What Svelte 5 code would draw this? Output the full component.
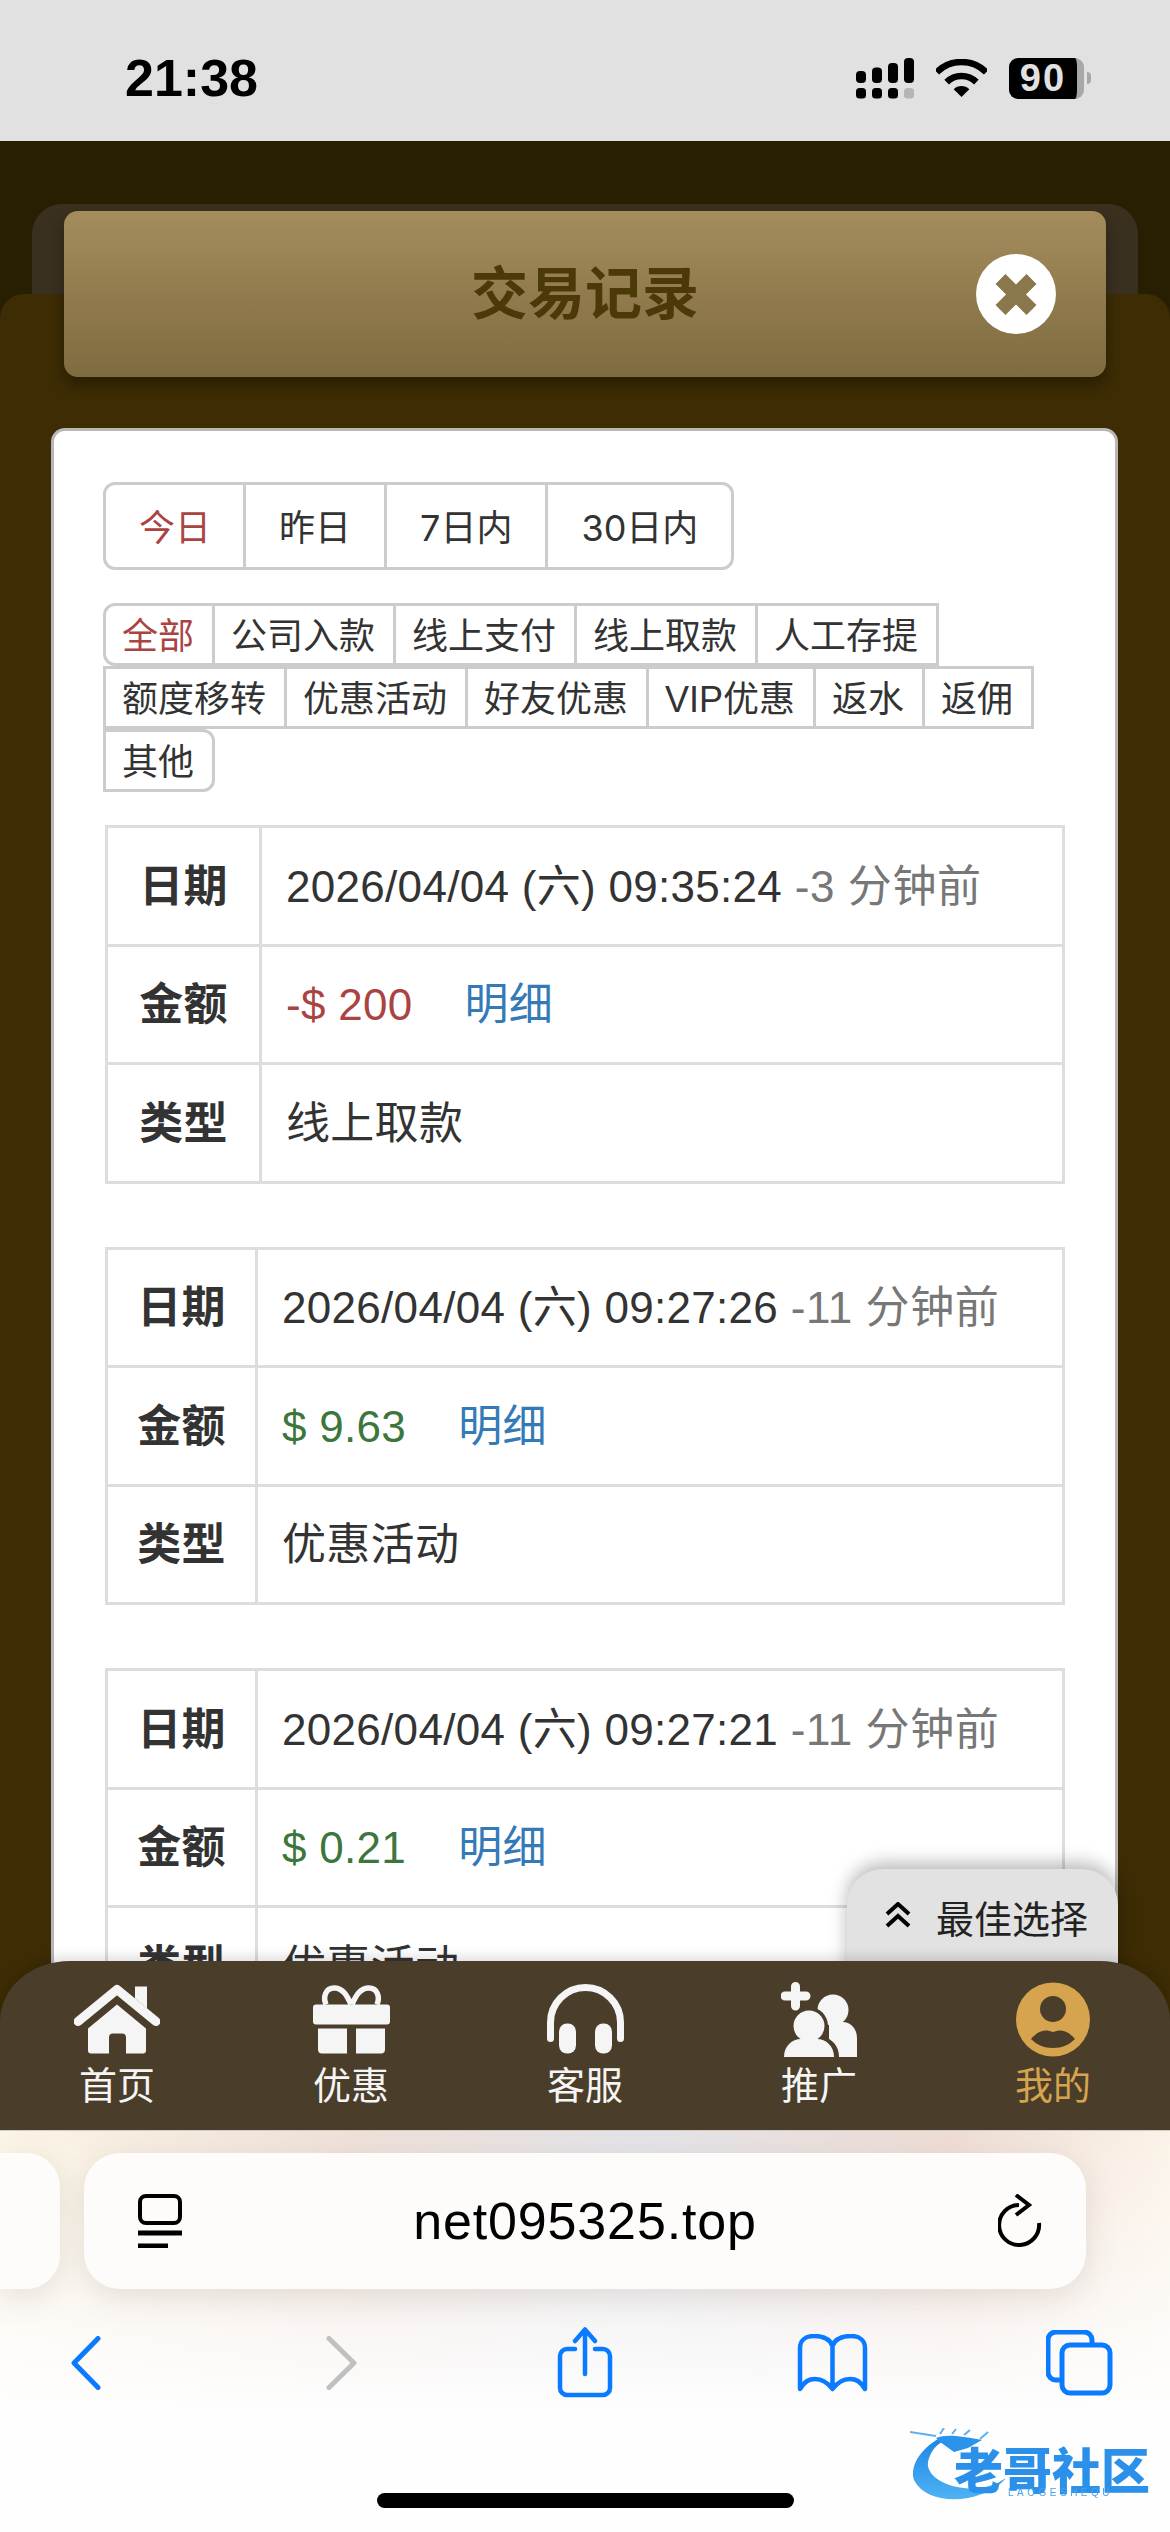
<script>
  const ranges = ['今日', '昨日', '7日内', '30日内'];
  const kinds = ['全部', '公司入款', '线上支付', '线上取款', '人工存提', '额度移转', '优惠活动', '好友优惠', 'VIP优惠', '返水', '返佣', '其他'];
  const records = [
    { date: '2026/04/04 (六) 09:35:24', ago: '-3 分钟前', amount: '-$ 200', tone: 'out', type: '线上取款', wide: true },
    { date: '2026/04/04 (六) 09:27:26', ago: '-11 分钟前', amount: '$ 9.63', tone: 'in', type: '优惠活动', wide: false },
    { date: '2026/04/04 (六) 09:27:21', ago: '-11 分钟前', amount: '$ 0.21', tone: 'in', type: '优惠活动', wide: false }
  ];
</script>

<div class="screen">
  <header class="status">
    <span class="time">21:38</span>
    <div class="status-icons">
      <svg class="signal" width="58" height="41" viewBox="0 0 58 41">
        <rect x="0" y="13" width="10" height="12" rx="4" />
        <rect x="16" y="9.500" width="10" height="15.500" rx="4" />
        <rect x="32" y="5" width="10" height="20" rx="4" />
        <rect x="48" y="0" width="10" height="25" rx="4" />
        <rect x="0" y="30" width="10" height="10.500" rx="3.500" />
        <rect x="16" y="30" width="10" height="10.500" rx="3.500" />
        <rect x="32" y="30" width="10" height="10.500" rx="3.500" />
        <rect x="48" y="30" width="10" height="10.500" rx="3.500" fill="#b5b5b5" />
      </svg>
      <svg class="wifi" width="51" height="38" viewBox="0 0 51 38">
        <path d="M0.750 13.250A35 35 0 0 1 50.250 13.250" />
        <path d="M10.650 23.150A21 21 0 0 1 40.350 23.150" />
        <path class="dot" d="M25.500 38L17.700 30.200A11 11 0 0 1 33.300 30.200Z" />
      </svg>
      <div class="battery"><span>90</span></div>
      <i class="nub"></i>
    </div>
  </header>

  <main class="page">
    <div class="head-back">
      <div class="head">
        <h1>交易记录</h1>
        <button class="close" aria-label="关闭">
          <svg width="42" height="41" viewBox="0 0 42 41"><path d="M5.500 5L36.500 36M36.500 5L5.500 36" /></svg>
        </button>
      </div>
    </div>

    <section class="sheet">
      <div class="card">
        <div class="ranges">
          {#each ranges as r, i}
            <span class="range" class:on={i === 0}>{r}</span>
          {/each}
        </div>

        <div class="kinds">
          {#each kinds as k, i}
            <span class="kind" class:on={i === 0}>{k}</span>
          {/each}
        </div>

        {#each records as rec}
          <table class:wide={rec.wide}>
            <tbody>
              <tr>
                <th>日期</th>
                <td>{rec.date} <span class="ago">{rec.ago}</span></td>
              </tr>
              <tr>
                <th>金额</th>
                <td><span class={rec.tone}>{rec.amount}</span><a class="more" href="#top">明细</a></td>
              </tr>
              <tr>
                <th>类型</th>
                <td>{rec.type}</td>
              </tr>
            </tbody>
          </table>
        {/each}
      </div>

      <button class="best">
        <svg width="28" height="26" viewBox="0 0 28 26"><path d="M3 12L14 2L25 12M3 24L14 14L25 24" /></svg>
        最佳选择
      </button>
    </section>
  </main>

  <nav class="tabs">
    <div class="tab">
      <svg width="86" height="68" viewBox="0 0 86 68" fill="#f5f5f5">
        <path d="M61 1h12v22l-12-10z" />
        <path d="M4 36L43 4L82 36" fill="none" stroke="#f5f5f5" stroke-width="9" stroke-linecap="round" stroke-linejoin="round" />
        <path d="M43 19L72 43V65a3 3 0 0 1-3 3H52V52a4 4 0 0 0-4-4H39a4 4 0 0 0-4 4V68H17a3 3 0 0 1-3-3V43z" />
      </svg>
      <span>首页</span>
    </div>
    <div class="tab">
      <svg width="77" height="68" viewBox="0 0 77 68" fill="#f5f5f5">
        <path d="M38 19C34 10 30 3 22 2.500C12 2 10 12 13 19M39 19C43 10 47 3 55 2.500C65 2 67 12 64 19" fill="none" stroke="#f5f5f5" stroke-width="5.500" />
        <rect x="0" y="19" width="77" height="20" rx="3" />
        <path d="M5 43H34V68H9a4 4 0 0 1-4-4zM43 43H72V64a4 4 0 0 1-4 4H43z" />
      </svg>
      <span>优惠</span>
    </div>
    <div class="tab">
      <svg width="77" height="68" viewBox="0 0 77 68" fill="#f5f5f5">
        <path d="M3.500 53V37A35 35 0 0 1 73.500 37V53" fill="none" stroke="#f5f5f5" stroke-width="7" stroke-linecap="round" />
        <rect x="12" y="38" width="17" height="30" rx="8" />
        <rect x="48" y="38" width="17" height="30" rx="8" />
      </svg>
      <span>客服</span>
    </div>
    <div class="tab">
      <svg width="76" height="75" viewBox="0 0 76 75" fill="#f5f5f5">
        <path d="M14.500 4.500V24M4 14H25" fill="none" stroke="#f5f5f5" stroke-width="9" stroke-linecap="round" />
        <circle cx="52" cy="28" r="15.500" />
        <path d="M46 40H62C70 40 76 47 76 56V75H48V40z" />
        <circle cx="28" cy="44" r="19" fill="#4a3e2a" />
        <path d="M0 75C0 62 8 52 28 52C48 52 58 62 58 75z" fill="#4a3e2a" />
        <circle cx="28" cy="44" r="15.500" />
        <path d="M3 75C3 64 11 57 20 57H36C45 57 53 64 53 75z" />
      </svg>
      <span>推广</span>
    </div>
    <div class="tab active">
      <svg width="74" height="75" viewBox="0 0 74 75">
        <circle cx="37" cy="37.500" r="37" fill="#d6a44e" />
        <circle cx="37" cy="27" r="13" fill="#4a3e2a" />
        <path d="M15 57C21 50 28 46 37 50C46 46 53 50 59 57C53 63 46 66 37 66C28 66 21 63 15 57z" fill="#4a3e2a" />
      </svg>
      <span>我的</span>
    </div>
  </nav>

  <footer class="safari">
    <div class="url-row">
      <div class="other-tab"></div>
      <div class="url">
        <svg class="ink" width="44" height="54" viewBox="0 0 44 54">
          <rect x="2" y="2" width="40" height="27" rx="6" stroke-width="4" />
          <path d="M0 39H44M0 52H30" stroke-width="5" />
        </svg>
        <span class="host">net095325.top</span>
        <svg class="ink" width="44" height="54" viewBox="0 0 44 54">
          <path d="M21 11A20 20 0 1 0 41 29" stroke-width="4" />
          <path d="M18 1L31 11L18 21" stroke-width="4" />
        </svg>
      </div>
    </div>

    <div class="toolbar">
      <svg class="blue" width="30" height="54" viewBox="0 0 30 54"><path d="M27 2.500L3 27L27 51.500" stroke-width="5" /></svg>
      <svg class="grey" width="31" height="54" viewBox="0 0 31 54"><path d="M3 2.500L28 27L3 51.500" stroke-width="5" /></svg>
      <svg class="blue" width="56" height="71" viewBox="0 0 56 71">
        <path d="M18 22H10a7 7 0 0 0-7 7V61a7 7 0 0 0 7 7H46a7 7 0 0 0 7-7V29a7 7 0 0 0-7-7H38" stroke-width="4.500" />
        <path d="M28 47V3M18 14L28 2.500L38 14" stroke-width="4.500" />
      </svg>
      <svg class="blue" width="71" height="58" viewBox="0 0 71 58">
        <path d="M35.500 12C33 5 26 2 17 2C8 2 3 7 3 14V55C8 47 12 45 18 45C25 45 31 49 35.500 55C40 49 46 45 53 45C59 45 63 47 68 55V14C68 7 63 2 54 2C45 2 38 5 35.500 12V50" stroke-width="4.500" />
      </svg>
      <svg class="blue" width="67" height="66" viewBox="0 0 67 66">
        <path d="M14 50H10a8 8 0 0 1-8-8V10a8 8 0 0 1 8-8H38a8 8 0 0 1 8 8V14" stroke-width="5" />
        <rect x="16" y="15" width="48" height="48" rx="8" stroke-width="5" />
      </svg>
    </div>

    <div class="home-bar"></div>

    <div class="mark">
      <svg width="120" height="76" viewBox="0 0 120 76">
        <defs>
          <linearGradient id="ring" x1="0" y1="0" x2="0" y2="1">
            <stop offset="0" stop-color="#1c86e6" />
            <stop offset="1" stop-color="#4fb2f4" />
          </linearGradient>
        </defs>
        <path d="M30 10C8 22 0 40 4 52C12 68 34 74 58 70C76 66 88 60 96 50C84 58 70 62 54 60C32 58 16 46 18 34C20 24 26 16 36 12z" fill="url(#ring)" />
        <path d="M26 10C36 6 50 8 72 12L58 20L44 24L30 14z" fill="#2b93ea" />
        <path d="M0 4L26 8M30 6L34 0M42 6L46 1M54 7L60 2M70 11L78 4" fill="none" stroke="#5fb0ef" stroke-width="2" />
      </svg>
      <strong>老哥社区</strong>
      <em>LAOGESHEQU</em>
    </div>
  </footer>
</div>

<style>
  :global(body) {
    margin: 0;
  }

  .screen {
    width: 1170px;
    height: 2532px;
    overflow: hidden;
    display: flex;
    flex-direction: column;
    position: relative;
    font-family: "Liberation Sans", "Noto Sans CJK SC", sans-serif;
    color: #333;
  }

  /* status bar */
  .status {
    height: 141px;
    flex: none;
    box-sizing: border-box;
    padding: 15px 79px 0 125px;
    background: #e1e1e1;
    display: flex;
    align-items: center;
    justify-content: space-between;
  }

  .time {
    font-size: 52px;
    font-weight: 700;
    color: #000;
  }

  .status-icons {
    display: flex;
    align-items: center;
  }

  .signal {
    fill: #000;
    margin-right: 22px;
  }

  .wifi {
    margin-right: 22px;
  }

  .wifi path {
    fill: none;
    stroke: #000;
    stroke-width: 6.500;
  }

  .wifi .dot {
    fill: #000;
    stroke: none;
  }

  .battery {
    width: 75px;
    height: 41px;
    box-sizing: border-box;
    border-right: 7px solid #a8a8a8;
    border-radius: 9px;
    background: #000;
    display: flex;
    align-items: center;
    justify-content: center;
  }

  .battery span {
    font-size: 38px;
    font-weight: 700;
    color: #e1e1e1;
    letter-spacing: 2px;
  }

  .nub {
    width: 4px;
    height: 12px;
    margin-left: 3px;
    background: #a8a8a8;
    border-radius: 0 4px 4px 0;
  }

  /* page */
  .page {
    flex: 1;
    min-height: 0;
    overflow: hidden;
    position: relative;
    background: #281f02;
  }

  .head-back {
    margin: 63px 32px 0;
    height: 90px;
    box-sizing: border-box;
    padding: 7px 32px 0;
    background: #3a3020;
    border-radius: 30px 30px 0 0;
  }

  .head {
    position: relative;
    z-index: 1;
    height: 166px;
    box-sizing: border-box;
    padding-bottom: 10px;
    display: flex;
    align-items: center;
    justify-content: center;
    border-radius: 14px;
    background: linear-gradient(180deg, #a48c5c, #7f6b40);
    box-shadow: 0 8px 14px rgba(0, 0, 0, 0.32);
  }

  .head h1 {
    margin: 0;
    font-size: 57px;
    font-weight: 700;
    color: #4b3a08;
  }

  .close {
    position: absolute;
    right: 50px;
    top: 43px;
    width: 80px;
    height: 80px;
    padding: 0;
    border: 0;
    border-radius: 50%;
    background: #fff;
    display: flex;
    align-items: center;
    justify-content: center;
  }

  .close path {
    fill: none;
    stroke: #8b774c;
    stroke-width: 14;
  }

  .sheet {
    padding: 134px 52px 0 51px;
    background: #3d2c04;
    border-radius: 24px 24px 0 0;
  }

  .card {
    box-sizing: border-box;
    padding: 51px 50px 0 49px;
    background: #fff;
    border: 3px solid #b8b8b8;
    border-bottom: 0;
    border-radius: 14px 14px 0 0;
  }

  .ranges {
    display: flex;
    margin-bottom: 33px;
  }

  .range {
    height: 88px;
    box-sizing: border-box;
    padding: 0 33px 3px;
    margin-right: -3px;
    display: flex;
    align-items: center;
    font-family: Inter, "Noto Sans CJK SC", sans-serif;
    font-size: 36px;
    border: 3px solid #ccc;
  }

  .range:first-child {
    padding-right: 32px;
    border-radius: 12px 0 0 12px;
  }

  .range:last-child {
    border-radius: 0 12px 12px 0;
  }

  .kinds {
    display: flex;
    flex-wrap: wrap;
    width: 962px;
    margin-bottom: 33px;
  }

  .kind {
    height: 63px;
    box-sizing: border-box;
    padding: 0 18px 3px 16px;
    margin-right: -3px;
    display: flex;
    align-items: center;
    font-size: 36px;
    border: 3px solid #ccc;
  }

  .kind:first-child {
    border-radius: 12px 0 0 12px;
  }

  .kind:last-child {
    border-radius: 0 12px 12px 0;
  }

  .on {
    color: #a94442;
  }

  table {
    width: 960px;
    margin: 0 0 63px 2px;
    border-collapse: collapse;
    table-layout: fixed;
    font-size: 44px;
    letter-spacing: 0.3px;
  }

  th,
  td {
    height: 118.500px;
    padding: 0 0 6px;
    border: 3px solid #ddd;
    box-sizing: border-box;
    text-align: left;
    font-weight: 400;
    white-space: nowrap;
  }

  th {
    width: 150px;
    text-align: center;
    font-weight: 700;
  }

  table.wide th {
    width: 154px;
  }

  td {
    padding-left: 24px;
  }

  .ago {
    color: #777;
    letter-spacing: 0.6px;
  }

  .out {
    color: #a94442;
  }

  .in {
    color: #3c763d;
  }

  .more {
    margin-left: 52px;
    color: #337ab7;
    text-decoration: none;
  }

  .best {
    position: absolute;
    right: 52px;
    bottom: 0;
    width: 271px;
    height: 161px;
    box-sizing: border-box;
    padding: 20px 0 0 37px;
    border: 0;
    border-radius: 36px 36px 0 0;
    background: #e2e2e2;
    box-shadow: 0 -6px 18px rgba(0, 0, 0, 0.28);
    display: flex;
    align-items: flex-start;
    gap: 24px;
    font: 38px "Liberation Sans", "Noto Sans CJK SC", sans-serif;
    color: #222;
  }

  .best svg {
    margin-top: 13px;
  }

  .best path {
    fill: none;
    stroke: #000;
    stroke-width: 4;
  }

  /* bottom tabs */
  .tabs {
    position: relative;
    flex: none;
    height: 169px;
    margin-top: -69px;
    box-sizing: border-box;
    padding-top: 21px;
    background: #4a3e2a;
    border-radius: 70px 70px 0 0 / 60px 60px 0 0;
    box-shadow: 0 -5px 12px rgba(0, 0, 0, 0.12);
    display: flex;
  }

  .tab {
    flex: 1;
    display: flex;
    flex-direction: column;
    align-items: center;
    color: #f5f5f5;
    font-size: 38px;
  }

  .tab svg {
    height: 75px;
    flex: none;
  }

  .tab span {
    margin-top: 7px;
    line-height: 44px;
  }

  .tab.active span {
    color: #d6a44e;
  }

  /* safari chrome */
  .safari {
    position: relative;
    flex: none;
    height: 402px;
    box-sizing: border-box;
    border-top: 1px solid #d0cdc8;
    background:
      linear-gradient(180deg, rgba(254, 254, 254, 0) 0, rgba(254, 254, 254, 0.6) 170px, #fefefe 280px),
      linear-gradient(90deg, #fbf5e6 0, #efe0d8 350px, #e3e3e8 640px, #eedcd4 950px, #fbf3e8 100%);
  }

  .url-row {
    display: flex;
    gap: 24px;
    padding-top: 22px;
  }

  .other-tab {
    width: 60px;
    height: 136px;
    background: #fdfcfb;
    border-radius: 0 34px 34px 0;
    box-shadow: 0 8px 30px rgba(120, 100, 80, 0.16);
  }

  .url {
    width: 1002px;
    height: 136px;
    box-sizing: border-box;
    padding: 0 44px 0 54px;
    background: #fdfcfb;
    border-radius: 36px;
    box-shadow: 0 8px 30px rgba(120, 100, 80, 0.16);
    display: flex;
    align-items: center;
    justify-content: space-between;
  }

  .host {
    margin-right: 10px;
    font-size: 52px;
    letter-spacing: 0.85px;
    color: #000;
  }

  .ink {
    fill: none;
    stroke: #000;
  }

  .toolbar {
    display: grid;
    grid-template-columns: 255px 231px 240px 249px 67px;
    align-items: center;
    height: 71px;
    margin-top: 38px;
    padding-left: 71px;
  }

  .blue {
    fill: none;
    stroke: #0a7aff;
    stroke-linecap: round;
    stroke-linejoin: round;
  }

  .grey {
    fill: none;
    stroke: #c0c0c0;
    stroke-linecap: round;
    stroke-linejoin: round;
  }

  .home-bar {
    width: 417px;
    height: 15px;
    margin: 95px auto 0;
    border-radius: 8px;
    background: #000;
  }

  /* watermark laid over the toolbar corner */
  .mark {
    position: absolute;
    left: 910px;
    top: 297px;
    width: 250px;
    height: 76px;
    filter: blur(0.7px);
  }

  .mark svg {
    position: absolute;
    left: 0;
    top: 0;
  }

  .mark strong {
    position: absolute;
    left: 44px;
    top: 22px;
    height: 36px;
    font: 900 49px/36px "Noto Sans CJK SC", sans-serif;
    color: #2a90ea;
    white-space: nowrap;
  }

  .mark em {
    position: absolute;
    left: 98px;
    top: 60px;
    font: normal 10px/1 "Liberation Sans", sans-serif;
    letter-spacing: 3.500px;
    color: #4d9fe6;
    white-space: nowrap;
  }
</style>
